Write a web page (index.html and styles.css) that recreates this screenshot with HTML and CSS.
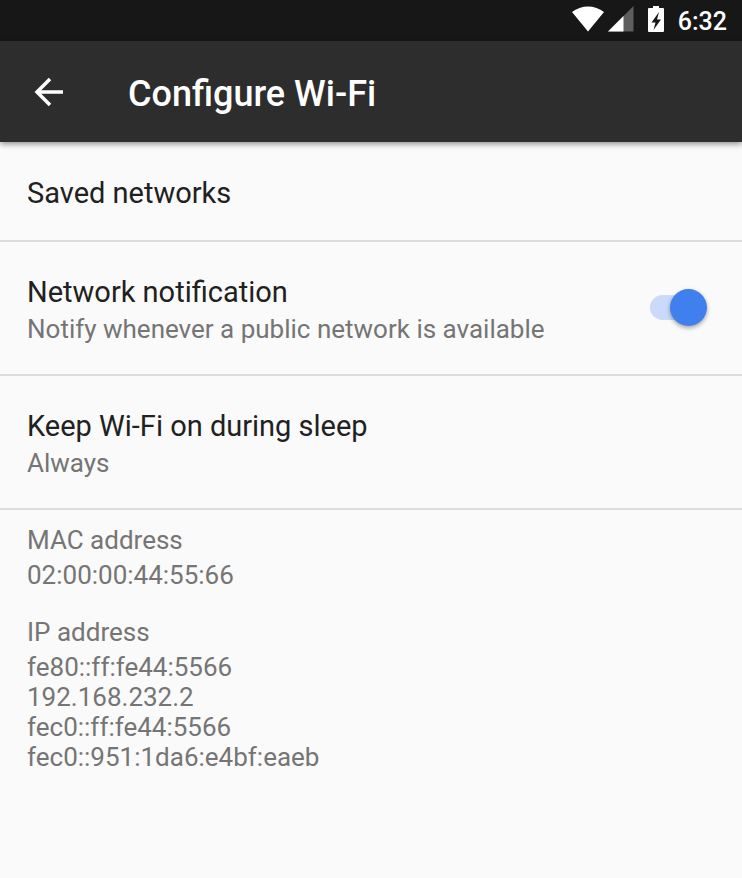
FILE: index.html
```html
<!DOCTYPE html>
<html lang="en">
<head>
    <meta charset="UTF-8">
    <title>Configure Wi-Fi</title>
    <meta name="viewport" content="width=device-width, initial-scale=1.0">
    <link rel="stylesheet" href="styles.css">
</head>
<body>

<div class="status-bar">
    <div class="status-icons">
        <svg class="wifi-icon" width="32" height="26" viewBox="0 0 32 26" aria-hidden="true">
            <path d="M0 6C9-1.500 23-1.500 32 6L16 25.500Z" fill="#fff"/>
        </svg>
        <svg class="signal-icon" width="26" height="26" viewBox="0 0 26 26" aria-hidden="true">
            <path d="M0 25.500L25.500 0V25.500Z" fill="#5e5e5e"/>
            <path d="M0 25.500L15.500 10V25.500Z" fill="#fff"/>
        </svg>
        <svg class="battery-icon" width="16" height="26" viewBox="0 0 16 26" aria-hidden="true">
            <path d="M5 0H11V2H15Q16 2 16 3V25Q16 26 15 26H1Q0 26 0 25V3Q0 2 1 2H5Z" fill="#fff"/>
            <path d="M11 6L3.500 16.500H7.500L5.500 24L13 13.500H9Z" fill="#171717"/>
        </svg>
    </div>
    <span class="clock">6:32</span>
</div>

<header class="app-bar">
    <button type="button" class="back-btn" aria-label="Back">
        <svg width="30" height="30" viewBox="0 0 30 30" aria-hidden="true">
            <path d="M29 15H3.500M16 2L3 15L16 28" fill="none" stroke="#fff" stroke-width="3.500"/>
        </svg>
    </button>
    <h1>Configure Wi-Fi</h1>
</header>

<main>
    <section class="setting">
        <div class="setting-text single">
            <h2 class="setting-title">Saved networks</h2>
        </div>
    </section>

    <section class="setting">
        <label class="setting-text" for="networkNotification">
            <span class="setting-title">Network notification</span>
            <span class="summary">Notify whenever a public network is available</span>
        </label>
        <input type="checkbox" role="switch" class="switch" id="networkNotification" checked>
    </section>

    <section class="setting">
        <div class="setting-text">
            <h2 class="setting-title">Keep Wi-Fi on during sleep</h2>
            <p class="summary">Always</p>
        </div>
    </section>

    <dl class="details">
        <dt>MAC address</dt>
        <dd>02:00:00:44:55:66</dd>
        <dt>IP address</dt>
        <dd>fe80::ff:fe44:5566<br>192.168.232.2<br>fec0::ff:fe44:5566<br>fec0::951:1da6:e4bf:eaeb</dd>
    </dl>
</main>

</body>
</html>
```
FILE: styles.css
```css
* {
    margin: 0;
    padding: 0;
    box-sizing: border-box;
    font-family: Roboto, sans-serif;
}

body {
    background: #fafafa;
    color: #212121;
    font-size: 26px;
    line-height: 30px;
}

.status-bar {
    display: flex;
    justify-content: flex-end;
    padding: 6px 15px 3px;
    background: #171717;
    color: #fff;
}

.status-icons {
    display: flex;
    align-items: flex-start;
}

.signal-icon {
    margin-left: 4px;
}

.battery-icon {
    margin-left: 14px;
}

.clock {
    margin-left: 14px;
    font-size: 25px;
    font-weight: 500;
    line-height: 32px;
}

.app-bar {
    position: relative;
    display: flex;
    align-items: center;
    height: 101px;
    padding: 0 34px;
    background: #2d2d2d;
    color: #fff;
    box-shadow: 0 2px 6px rgba(0,0,0,0.45);
}

.back-btn {
    display: flex;
    margin-right: 64px;
    background: none;
    border: none;
    cursor: pointer;
}

.app-bar h1 {
    padding-top: 4px;
    font-size: 36px;
    font-weight: 500;
    line-height: 44px;
}

.setting {
    display: flex;
    justify-content: space-between;
    align-items: center;
    padding: 0 35px 0 27px;
    border-bottom: 2px solid #dcdcdc;
}

.setting-text {
    padding: 32px 0 26px;
}

.setting-text.single {
    padding: 33px 0 29px;
}

.setting-title {
    display: block;
    font-size: 29px;
    font-weight: 400;
    line-height: 36px;
}

.summary {
    display: block;
    line-height: 38px;
    color: #757575;
}

.switch {
    appearance: none;
    display: flex;
    align-items: flex-start;
    position: relative;
    flex-shrink: 0;
    width: 57px;
    height: 38px;
    cursor: pointer;
}

/* track */
.switch::after {
    content: "";
    position: absolute;
    left: 0;
    top: 6px;
    z-index: -1;
    width: 48px;
    height: 25px;
    border-radius: 13px;
    background: #c9dafa;
}

/* thumb */
.switch::before {
    content: "";
    width: 37px;
    height: 37px;
    border-radius: 50%;
    background: #bdbdbd;
    box-shadow: 0 2px 4px rgba(0,0,0,0.35);
}

.switch:checked::before {
    margin-left: auto;
    background: #4080ee;
}

.details {
    padding: 15px 27px;
    color: #757575;
}

.details dt {
    margin-bottom: 5px;
}

.details dd {
    margin-bottom: 27px;
}
```
